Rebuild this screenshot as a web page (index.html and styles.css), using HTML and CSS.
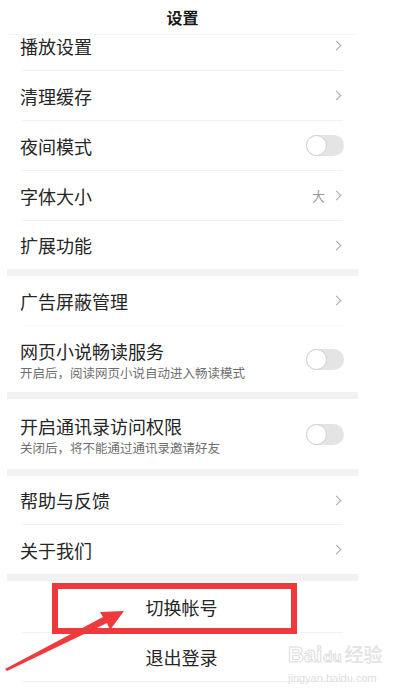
FILE: index.html
```html
<!DOCTYPE html>
<html>
	<head>
		<meta charset="UTF-8">
		<title>设置</title>
		<link rel="stylesheet" href="styles.css">
	</head>
	<body>
		<div id="page">
			<div class="head">设置</div>

			<div class="row cut">
				<span class="label">播放设置</span>
				<i class="arrow"></i>
			</div>
			<div class="line"></div>
			<div class="row">
				<span class="label">清理缓存</span>
				<i class="arrow"></i>
			</div>
			<div class="line"></div>
			<div class="row">
				<span class="label">夜间模式</span>
				<span class="switch"></span>
			</div>
			<div class="line"></div>
			<div class="row">
				<span class="label">字体大小</span>
				<span class="value">大</span>
				<i class="arrow"></i>
			</div>
			<div class="line"></div>
			<div class="row last">
				<span class="label">扩展功能</span>
				<i class="arrow"></i>
			</div>
			<div class="band"></div>

			<div class="row">
				<span class="label">广告屏蔽管理</span>
				<i class="arrow"></i>
			</div>
			<div class="line faint"></div>
			<div class="row tall">
				<div class="text">
					<p class="label">网页小说畅读服务</p>
					<p class="sub">开启后，阅读网页小说自动进入畅读模式</p>
				</div>
				<span class="switch"></span>
			</div>
			<div class="band"></div>

			<div class="row tall big">
				<div class="text">
					<p class="label">开启通讯录访问权限</p>
					<p class="sub">关闭后，将不能通过通讯录邀请好友</p>
				</div>
				<span class="switch"></span>
			</div>
			<div class="band"></div>

			<div class="row last">
				<span class="label">帮助与反馈</span>
				<i class="arrow"></i>
			</div>
			<div class="line"></div>
			<div class="row">
				<span class="label">关于我们</span>
				<i class="arrow"></i>
			</div>
			<div class="band"></div>

			<div class="row center first">切换帐号</div>
			<div class="line"></div>
			<div class="row center">退出登录</div>
			<div class="line"></div>
		</div>

		<!-- 标注 -->
		<div class="mark"></div>
		<svg class="pointer" width="405" height="688" viewBox="0 0 405 688">
			<polygon points="5,669 103,617 100,612 124,611 110,630 107,623 7,671" fill="#ee3a3c"/>
		</svg>
		<div class="logo">
			<div class="logo-top">Bai<span class="paw">du</span><span class="cn">经验</span></div>
			<div class="logo-url">jingyan.baidu.com</div>
		</div>
	</body>
</html>
```

FILE: styles.css
```css
*{
	padding: 0;
	margin: 0;
}
body{
	background: #fff;
	font-family: "Noto Sans CJK SC", "Noto Sans", sans-serif;
	color: #262626;
	width: 405px;
	height: 688px;
	overflow: hidden;
	position: relative;
}
#page {
	width: 351px;
	margin-left: 7px;
}
.head {
	height: 34px;
	line-height: 34px;
	text-align: center;
	font-size: 16px;
	font-weight: bold;
	color: #1a1a1a;
	border-bottom: 1px solid #f6f6f6;
}
.row {
	display: flex;
	align-items: center;
	height: 49px;
	padding: 0 15px 0 13px;
}
.row.cut {
	height: 35px;
	padding-bottom: 14px;
	box-sizing: border-box;
}
.row.last {
	height: 48px;
}
.row.tall {
	height: 60px;
	padding-top: 6px;
}
.row.tall.big {
	height: 64px;
}
.row.center {
	justify-content: center;
	font-size: 18px;
	height: 48px;
}
.row.center.first {
	height: 51px;
}
.label {
	flex: 1;
	font-size: 18px;
	line-height: 22px;
}
.text {
	flex: 1;
}
.sub {
	font-size: 12.5px;
	line-height: 22px;
	color: #6f6f6f;
}
.value {
	font-size: 13px;
	color: #999;
	margin-right: 8px;
}
.arrow {
	width: 6px;
	height: 6px;
	border-top: 1.2px solid #a8a8a8;
	border-right: 1.2px solid #a8a8a8;
	transform: rotate(45deg);
	margin-right: 3px;
}
.switch {
	width: 38px;
	height: 21px;
	border-radius: 11px;
	background: #e4e4e4;
	box-sizing: border-box;
	display: flex;
	margin-right: -1px;
}
.row.tall .switch {
	margin-top: -6px;
}
.switch::before {
	content: "";
	width: 21px;
	height: 21px;
	border-radius: 50%;
	background: #fff;
	border: 1px solid #cfcfcf;
	box-sizing: border-box;
}
.line {
	height: 1px;
	margin: 0 15px;
	background: #f1f1f1;
}
.line.faint {
	background: #fafafa;
}
.band {
	height: 7px;
	background: #f2f2f2;
}
.mark {
	position: absolute;
	left: 52px;
	top: 583px;
	width: 245px;
	height: 51px;
	border: 6px solid #ee3a3c;
	box-sizing: border-box;
}
.pointer {
	position: absolute;
	left: 0;
	top: 0;
	pointer-events: none;
}
.logo {
	position: absolute;
	left: 288px;
	top: 641px;
	color: #fff;
	-webkit-text-stroke: 1px #dedede;
	font-family: "Liberation Sans", sans-serif;
}
.logo-top {
	font-size: 22px;
	font-weight: bold;
	line-height: 26px;
	white-space: nowrap;
}
.paw {
	font-size: 15px;
	margin: 0 3px 0 1px;
}
.cn {
	font-family: "Noto Sans CJK SC", sans-serif;
	font-size: 19px;
	-webkit-text-stroke: 0;
	color: #e6e6e6;
}
.logo-url {
	font-size: 11px;
	line-height: 16px;
	-webkit-text-stroke: 0;
	color: #dedede;
}
```
